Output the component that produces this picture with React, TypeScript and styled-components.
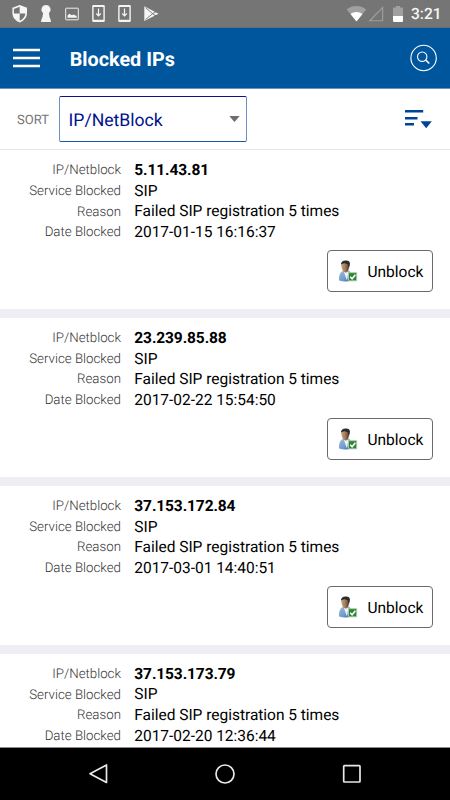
import React from "react";
import styled, { createGlobalStyle } from "styled-components";

const Global = createGlobalStyle`
  * { box-sizing: border-box; }
  body {
    margin: 0;
    background: #fff;
    font-family: Roboto, "Liberation Sans", sans-serif;
    text-rendering: geometricPrecision;
  }
`;

const Screen = styled.div`
  width: 450px;
  height: 800px;
  display: flex;
  flex-direction: column;
  overflow: hidden;
  background: #fff;
`;

const StatusBar = styled.div`
  height: 28px;
  flex: none;
  display: flex;
  justify-content: space-between;
  background: #757575;
  border-bottom: 1px solid #5d6f86;
`;

const StatusRight = styled.div`
  display: flex;
`;

const Clock = styled.span`
  width: 39px;
  font-size: 15.6px;
  font-weight: 500;
  line-height: 29px;
  color: #f5f5f5;
`;

const Header = styled.header`
  height: 61px;
  flex: none;
  display: flex;
  align-items: center;
  padding: 0 12px 0 13px;
  background: #00569d;
  border-bottom: 1px solid #6a93bd;
`;

const Title = styled.h1`
  margin: 4px auto 0 29.7px;
  font-size: 19.8px;
  font-weight: 700;
  line-height: 24px;
  color: #fff;
`;

const IconButton = styled.button`
  display: flex;
  padding: 0;
  border: 0;
  background: none;
`;

const SortBar = styled.div`
  height: 61px;
  flex: none;
  display: flex;
  align-items: center;
  padding: 0 17px;
  border-bottom: 1px solid #e6e6ea;
`;

const SortLabel = styled.span`
  width: 41.5px;
  padding-top: 2px;
  font-size: 13px;
  color: #777;
`;

const Select = styled.div`
  width: 188px;
  height: 46px;
  margin: 0 auto 0 0;
  display: flex;
  align-items: center;
  justify-content: space-between;
  padding: 0 6px 0 9px;
  border: 1px solid #20409a;
  border-color: #10108c #6f8fc4 #1558a4;
  border-radius: 2px;
  font-size: 17.6px;
  color: #00128c;
`;

const SelectText = styled.span`
  padding-top: 3px;
`;

const List = styled.main`
  flex: 1;
  min-height: 0;
  overflow: hidden;
`;

const Card = styled.section`
  height: 167.85px;
  display: flex;
  flex-direction: column;
  padding-top: 10.6px;
  border-bottom: 9px solid #eeeef4;
`;

const Fields = styled.dl`
  margin: 0;
  display: grid;
  grid-template-columns: 121px 1fr;
  column-gap: 13.3px;
  grid-auto-rows: 20.6px;
  align-items: center;
`;

const Label = styled.dt`
  text-align: right;
  font-size: 13.3px;
  font-weight: 300;
  color: #333;
`;

const Value = styled.dd<{ $bold?: boolean }>`
  margin: 0;
  padding-bottom: 1.2px;
  font-size: 15.5px;
  letter-spacing: ${(p) => (p.$bold ? "-0.1px" : "-0.02px")};
  font-weight: ${(p) => (p.$bold ? 700 : 400)};
  color: #000;
`;

const UnblockButton = styled.button`
  align-self: flex-end;
  width: 106px;
  height: 42px;
  margin: 7.4px 17px 0 0;
  display: flex;
  align-items: center;
  gap: 8.5px;
  padding: 0 0 0 10px;
  border: 1px solid #6b6b6b;
  border-radius: 4px;
  background: #fff;
  font-family: inherit;
  font-size: 15.5px;
  text-rendering: inherit;
  color: #000;
`;

const ButtonText = styled.span`
  padding-top: 2px;
`;

const NavBar = styled.nav`
  height: 53px;
  flex: none;
  display: flex;
  justify-content: center;
  gap: 99px;
  padding-top: 12px;
  background: #000;
  border-top: 1px solid #8a8a8a;
`;

const LeftStatusIcons = () => (
  <svg width="170" height="27" viewBox="0 0 170 27" fill="#f5f5f5">
    <path d="M19.700 4.900 27 7.700v5.300c0 4.200-2.900 7.800-7.300 9.500-4.400-1.700-7.300-5.300-7.300-9.500V7.700z" />
    <path d="M19.700 6.700v6.800H14c-.1-.5-.1-1-.1-1.400V8.900zM19.700 13.500h5.700c-.3 3.300-2.400 5.800-5.700 7.200z" fill="#757575" />
    <path d="M46 5a4.600 4.600 0 0 1 2.900 8.100q.3 4 1.600 6.200l.5 2.700H41l.5-2.700q1.300-2.200 1.600-6.200A4.600 4.600 0 0 1 46 5z" />
    <path d="M66.200 8.200h11.600q.5 0 .5.500v10.600q0 .5-.5.500H66.200q-.5 0-.5-.5V8.700q0-.5.500-.5z" fill="none" stroke="#f0f0f0" />
    <path d="M67.500 17.700v-2.200l1.800-1.800 2.500 1.600 1.600-.9 3.300 1.500v1.800z" />
    {[92, 118].map((x) => (
      <g key={x} transform={`translate(${x} 0)`}>
        <path fillRule="evenodd" d="M1.500 5h10q1.300 0 1.300 1.300v14.400q0 1.300-1.300 1.300h-10Q.2 22 .2 20.700V6.300Q.2 5 1.500 5zM1.600 7v12.700h9.800V7z" />
        <path d="M6.500 8.500V16M4.200 13.500l2.300 2.300 2.300-2.300" fill="none" stroke="#f5f5f5" strokeWidth="1.200" />
      </g>
    ))}
    <path d="M144.300 6.300 158.500 13.700 144.300 21z" />
    <path d="m145.500 7.700 11.500 9.500M145.500 19.500 157 10.200" stroke="#757575" strokeWidth=".9" />
    <path d="M154.500 14.700 157 16.500M154.500 12.700 157 11" stroke="#757575" />
  </svg>
);

const RightStatusIcons = () => (
  <svg width="65" height="27" viewBox="346 0 65 27">
    <path d="M346.700 9.500c5.500-4.600 14-4.600 19.500 0L356.500 21.500z" fill="#a0a0a0" />
    <path d="M350.500 14c3.500-2.800 8.500-2.800 12 0l-6 7.500z" fill="#fff" />
    <path d="M382.700 7.300v13.500h-13z" fill="none" stroke="#a0a0a0" strokeWidth="1.100" />
    <path d="M396 6h4v1.500h3V16h-10V7.500h3z" fill="#a0a0a0" />
    <path d="M393 16h10v5q0 1-1 1h-8q-1 0-1-1z" fill="#fff" />
  </svg>
);

const MenuIcon = () => (
  <svg width="27" height="20" viewBox="0 0 27 20">
    <path d="M0 2h27M0 10h27M0 18h27" stroke="#fff" strokeWidth="2.500" />
  </svg>
);

const SearchIcon = () => (
  <svg width="28" height="28" viewBox="0 0 28 28" fill="none" stroke="#fff">
    <circle cx="13.600" cy="14" r="12.700" strokeWidth="1.100" />
    <circle cx="12.200" cy="12.700" r="4.700" strokeWidth="1.100" />
    <path d="m15.700 16 3.600 3.500" strokeWidth="1.600" />
  </svg>
);

const OrderIcon = () => (
  <svg width="28" height="20" viewBox="0 0 28 20">
    <path d="M0 2.200h18.200M0 9.200h12.500M0 15.200h9" stroke="#004398" strokeWidth="2.500" />
    <path d="M15.500 12.300h11.300l-5.600 6.900z" fill="#004398" />
  </svg>
);

const UserCheckIcon = () => (
  <svg width="21" height="22" viewBox="0 0 21 22">
    <defs>
      <linearGradient id="coat" x1="0" x2="1" y1="0" y2="1">
        <stop offset="0" stopColor="#a3bfde" />
        <stop offset=".6" stopColor="#6d98cb" />
        <stop offset="1" stopColor="#24569c" />
      </linearGradient>
      <linearGradient id="skin" x1="0" x2="1">
        <stop offset="0" stopColor="#c9a07a" />
        <stop offset=".5" stopColor="#a97f5c" />
        <stop offset="1" stopColor="#4b372b" />
      </linearGradient>
    </defs>
    <path d="M1 20.500C.7 15 2 12 5.500 10.500h4.500c3 1.200 4 3 4 10q-6.500 2-13 0z" fill="url(#coat)" />
    <path d="m5.500 11 3.500 9.500 1.500-9z" fill="#edf3fa" />
    <path d="M3.200 5C3.200 2.500 5 1.500 7 1.500s4 1.200 4 4.200c0 4-1.300 6.800-3.500 6.800S3.700 9.500 3.200 5z" fill="url(#skin)" />
    <path d="M3 4.800C2.700 2 4.500.4 7.500.4c3.200 0 5 1.400 4.300 4.600l-.8 3-1-3.700L6.500 3.300 3.500 4z" fill="#292b2e" />
    <path d="M10.500 12.700h8.200v8.100h-8.200z" fill="#2b8734" stroke="#b5c9b5" strokeWidth=".9" />
    <path d="m12.200 16.700 1.900 2.100 3.300-4" fill="none" stroke="#fff" strokeWidth="1.500" />
  </svg>
);

const entries = [
  { ip: "5.11.43.81", date: "2017-01-15 16:16:37" },
  { ip: "23.239.85.88", date: "2017-02-22 15:54:50" },
  { ip: "37.153.172.84", date: "2017-03-01 14:40:51" },
  { ip: "37.153.173.79", date: "2017-02-20 12:36:44" },
];

const BlockedEntry = ({ ip, date }: { ip: string; date: string }) => (
  <Card>
    <Fields>
      <Label>IP/Netblock</Label>
      <Value $bold>{ip}</Value>
      <Label>Service Blocked</Label>
      <Value>SIP</Value>
      <Label>Reason</Label>
      <Value>Failed SIP registration 5 times</Value>
      <Label>Date Blocked</Label>
      <Value>{date}</Value>
    </Fields>
    <UnblockButton>
      <UserCheckIcon />
      <ButtonText>Unblock</ButtonText>
    </UnblockButton>
  </Card>
);

export default function App() {
  return (
    <>
      <Global />
      <Screen>
        <StatusBar>
          <LeftStatusIcons />
          <StatusRight>
            <RightStatusIcons />
            <Clock>3:21</Clock>
          </StatusRight>
        </StatusBar>
        <Header>
          <IconButton aria-label="Menu"><MenuIcon /></IconButton>
          <Title>Blocked IPs</Title>
          <IconButton aria-label="Search"><SearchIcon /></IconButton>
        </Header>
        <SortBar>
          <SortLabel>SORT</SortLabel>
          <Select>
            <SelectText>IP/NetBlock</SelectText>
            <svg width="11" height="8" viewBox="0 0 11 8">
              <path d="M.3 1h10.400L5.500 7z" fill="#6e6e6e" />
            </svg>
          </Select>
          <IconButton aria-label="Sort order"><OrderIcon /></IconButton>
        </SortBar>
        <List>
          {entries.map((entry, index) => (
            <BlockedEntry key={index} {...entry} />
          ))}
        </List>
        <NavBar>
          <svg width="28" height="28" viewBox="0 0 28 28" fill="none" stroke="#e8e8e8" strokeWidth="1.700" strokeLinejoin="round">
            <path d="M22.500 5v17.500L6 13.700z" />
          </svg>
          <svg width="28" height="28" viewBox="0 0 28 28" fill="none" stroke="#e8e8e8" strokeWidth="1.700">
            <circle cx="14" cy="14" r="9" />
          </svg>
          <svg width="28" height="28" viewBox="0 0 28 28" fill="none" stroke="#e8e8e8" strokeWidth="1.700">
            <rect x="5.700" y="5.700" width="16.300" height="16.300" rx=".7" />
          </svg>
        </NavBar>
      </Screen>
    </>
  );
}
